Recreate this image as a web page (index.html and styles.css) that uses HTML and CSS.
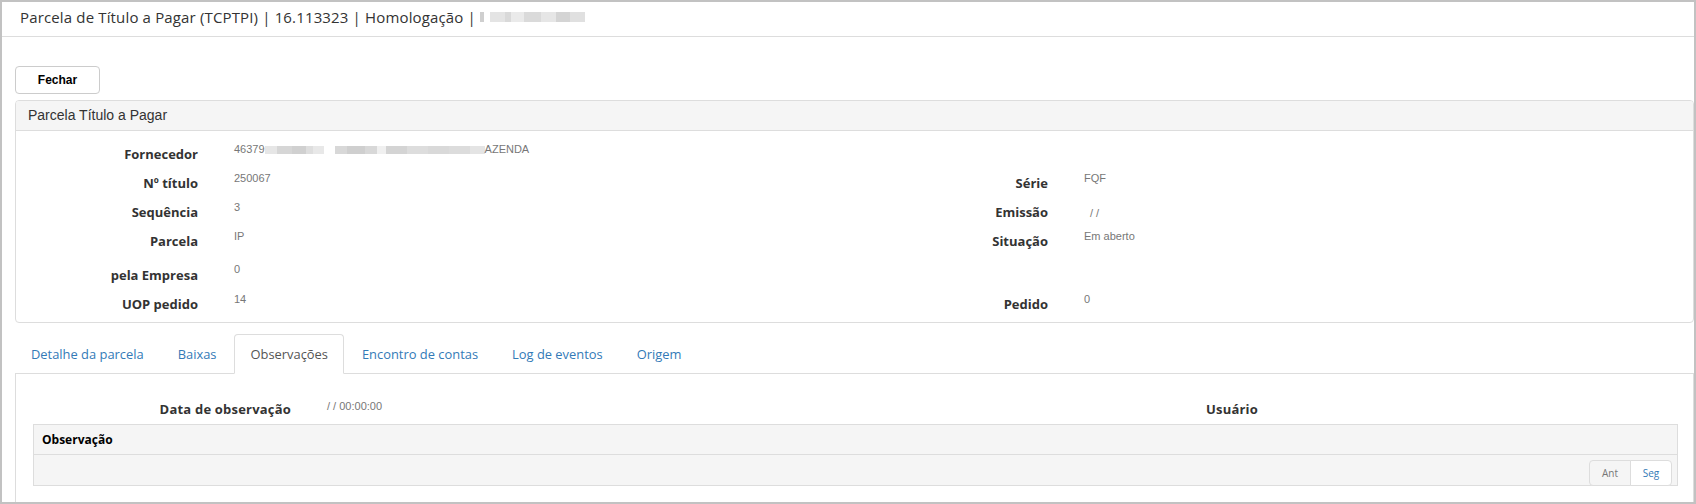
FILE: index.html
```html
<!DOCTYPE HTML>
<html lang="pt">
  <head>
    <title>Parcela de Título a Pagar</title>
    <meta charset="utf-8">
    <link rel="stylesheet" href="styles.css">
  </head>
  <body>
  <div class="page">

    <div class="topbar">
      Parcela de Título a Pagar (TCPTPI) | 16.113323 | Homologação | <span class="redact redact-title"></span>
    </div>

    <div class="content">
      <button class="btn">Fechar</button>

      <div class="panel">
        <div class="panel-heading">Parcela Título a Pagar</div>
        <div class="fields">
          <div class="lbl">Fornecedor</div>
          <div class="val">46379<span class="redact redact-a"></span><span class="redact redact-b"></span>AZENDA</div>
          <div></div><div></div>

          <div class="lbl">Nº título</div>
          <div class="val">250067</div>
          <div class="lbl">Série</div>
          <div class="val">FQF</div>

          <div class="lbl">Sequência</div>
          <div class="val">3</div>
          <div class="lbl">Emissão</div>
          <div class="val date">/ /</div>

          <div class="lbl">Parcela</div>
          <div class="val">IP</div>
          <div class="lbl">Situação</div>
          <div class="val">Em aberto</div>

          <div class="lbl tall">pela Empresa</div>
          <div class="val tall">0</div>
          <div></div><div></div>

          <div class="lbl">UOP pedido</div>
          <div class="val">14</div>
          <div class="lbl">Pedido</div>
          <div class="val">0</div>
        </div>
      </div>

      <ul class="tabs">
        <li class="tab">Detalhe da parcela</li>
        <li class="tab">Baixas</li>
        <li class="tab active">Observações</li>
        <li class="tab">Encontro de contas</li>
        <li class="tab">Log de eventos</li>
        <li class="tab">Origem</li>
      </ul>

      <div class="tab-content">
        <div class="obs-form">
          <div class="lbl">Data de observação</div>
          <div class="val obs-val">/ / 00:00:00</div>
          <div class="lbl">Usuário</div>
          <div class="val obs-val"></div>
        </div>

        <div class="grid-table">
          <div class="grid-head">Observação</div>
          <div class="grid-foot">
            <div class="pager">
              <span class="pg disabled">Ant</span>
              <span class="pg">Seg</span>
            </div>
          </div>
        </div>
      </div>
    </div>

  </div>
  </body>
</html>
```

FILE: styles.css
```css
html, body {
  margin: 0;
  padding: 0;
}
body {
  background: #ffffff;
  color: #333333;
  font-family: "Open Sans", sans-serif;
}

.page {
  width: 1696px;
  height: 504px;
  box-sizing: border-box;
  border: 2px solid #c2c2c2;
  overflow: hidden;
}

.topbar {
  height: 29px;
  padding: 5px 0 0 18px;
  border-bottom: 1px solid #dddddd;
  font-size: 15px;
  letter-spacing: 0.15px;
  line-height: 20px;
  color: #333333;
  white-space: nowrap;
}

.redact {
  display: inline-block;
  vertical-align: middle;
}
.redact-title {
  width: 105px;
  height: 10px;
  margin-top: -3px;
  background: linear-gradient(90deg, #cfcfcf 0 4%, #fff 4% 10%, #e4e4e4 10% 24%, #d9d9d9 24% 30%, #eaeaea 30% 42%, #dadada 42% 58%, #e6e6e6 58% 72%, #d4d4d4 72% 86%, #e0e0e0 86% 100%);
}
.redact-a {
  width: 59px;
  height: 8px;
  margin-right: 11px;
  background: linear-gradient(90deg, #e6e6e6 0 20%, #d6d6d6 20% 45%, #d0d0d0 45% 70%, #dedede 70% 82%, #e8e8e8 82% 100%);
}
.redact-b {
  width: 150px;
  height: 8px;
  background: linear-gradient(90deg, #d8d8d8 0 8%, #cfcfcf 8% 20%, #d8d8d8 20% 28%, #f0f0f0 28% 34%, #d4d4d4 34% 48%, #dddddd 48% 62%, #d9d9d9 62% 76%, #dcdcdc 76% 90%, #e4e4e4 90% 100%);
}

.content {
  padding: 29px 0 0 13px;
}

.btn {
  display: block;
  width: 85px;
  height: 28px;
  box-sizing: border-box;
  padding: 0;
  border: 1px solid #cccccc;
  border-radius: 4px;
  background: #ffffff;
  color: #000000;
  font: bold 12px "Liberation Sans", Arial, sans-serif;
}

.panel {
  margin-top: 6px;
  border: 1px solid #dddddd;
  border-radius: 4px;
}
.panel-heading {
  height: 29px;
  padding: 0 12px;
  background: #f5f5f5;
  border-bottom: 1px solid #dddddd;
  border-radius: 3px 3px 0 0;
  font: 14px "Liberation Sans", Arial, sans-serif;
  line-height: 29px;
  color: #333333;
}

.fields {
  display: grid;
  grid-template-columns: 182px 596px 182px 1fr;
  grid-template-rows: 29px 29px 29px 29px 34px 29px;
  column-gap: 36px;
  padding: 8px 0 4px;
}

.lbl {
  text-align: right;
  font-weight: bold;
  font-size: 13px;
  line-height: 20px;
  padding-top: 5px;
  color: #333333;
  white-space: nowrap;
}
.val {
  font: 11px "Liberation Sans", Arial, sans-serif;
  line-height: 14px;
  padding-top: 3px;
  color: #777777;
  white-space: nowrap;
}
.lbl.tall {
  padding-top: 10px;
}
.val.tall {
  padding-top: 7px;
}
.val.date {
  padding: 9px 0 0 6px;
}

.tabs {
  display: flex;
  list-style: none;
  margin: 11px 0 0;
  padding: 0;
  border-bottom: 1px solid #dddddd;
}
.tab {
  margin: 0 2px -1px 0;
  padding: 10px 15px;
  border: 1px solid transparent;
  border-radius: 4px 4px 0 0;
  font-size: 12.9px;
  line-height: 18px;
  color: #337ab7;
  cursor: pointer;
}
.tab.active {
  color: #555555;
  background: #ffffff;
  border-color: #dddddd #dddddd transparent;
}

.tab-content {
  height: 200px;
  padding: 20px 15px 0 17px;
  border: 1px solid #dddddd;
  border-top: 0;
}

.obs-form {
  display: grid;
  grid-template-columns: 258px 637px 258px 1fr;
  column-gap: 36px;
  height: 30px;
}
.obs-form .lbl {
  letter-spacing: 0.2px;
}
.obs-val {
  padding-top: 5px;
}

.grid-table {
  border: 1px solid #dddddd;
}
.grid-head {
  height: 29px;
  line-height: 29px;
  padding-left: 8px;
  background: #f5f5f5;
  border-bottom: 1px solid #dddddd;
  font-size: 12px;
  font-weight: bold;
  color: #000000;
}
.grid-foot {
  display: flex;
  justify-content: flex-end;
  align-items: flex-start;
  height: 30px;
  padding: 5px 5px 0 0;
  box-sizing: border-box;
  background: #f5f5f5;
}

.pager {
  display: flex;
  height: 26px;
}
.pg {
  width: 42px;
  box-sizing: border-box;
  border: 1px solid #dddddd;
  border-radius: 0 4px 4px 0;
  margin-left: -1px;
  background: #ffffff;
  color: #337ab7;
  font-size: 10px;
  line-height: 24px;
  text-align: center;
}
.pg.disabled {
  margin-left: 0;
  border-radius: 4px 0 0 4px;
  background: #f5f5f5;
  color: #777777;
}
```
